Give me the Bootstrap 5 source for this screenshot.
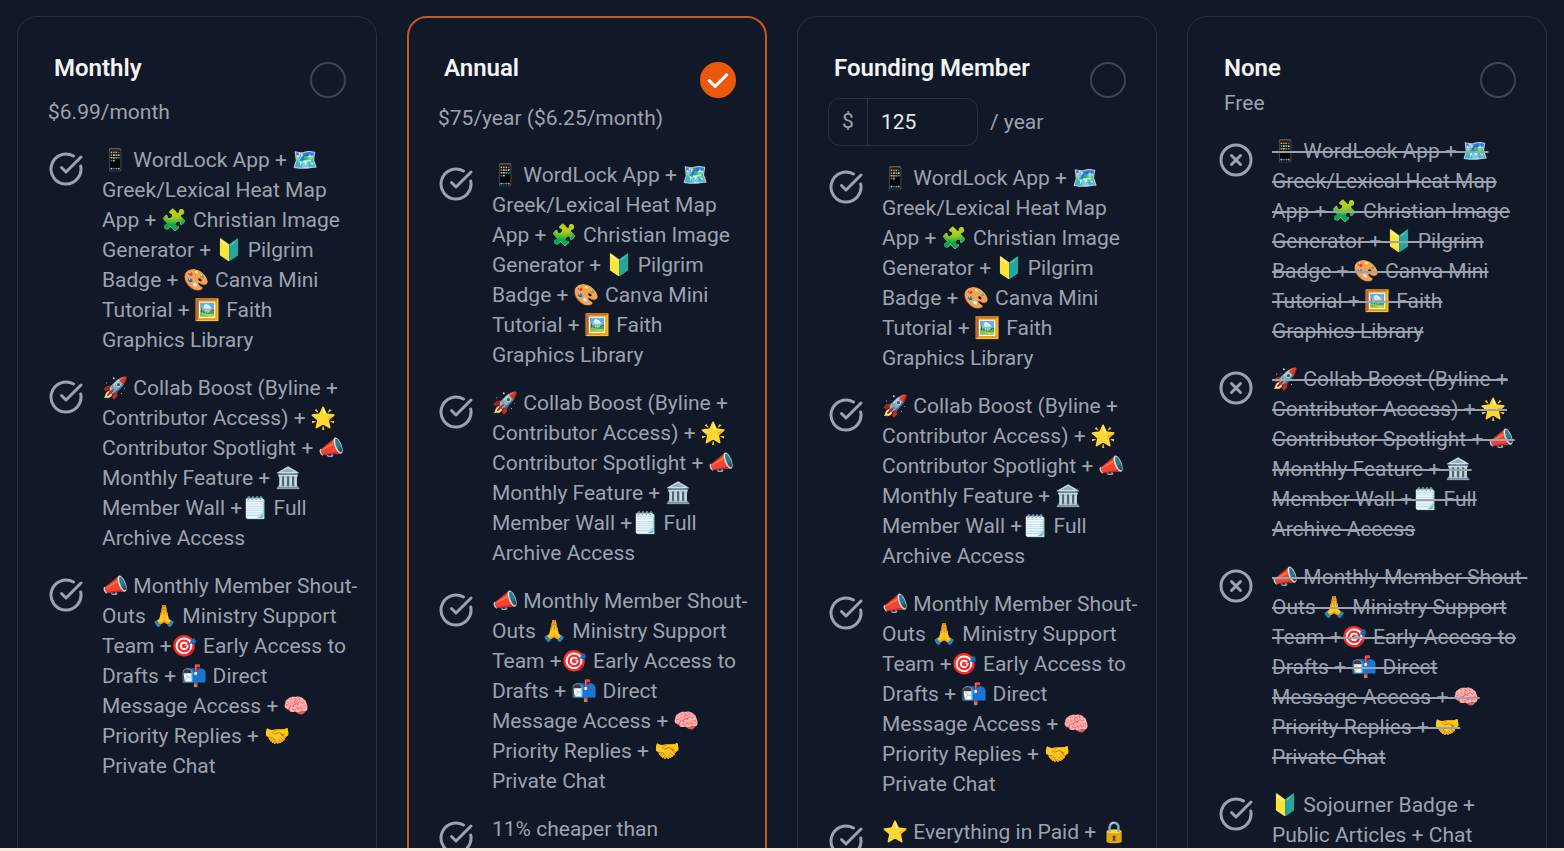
<!DOCTYPE html>
<html lang="en">
<head>
<meta charset="utf-8">
<title>Membership tiers</title>
<link href="https://cdn.jsdelivr.net/npm/bootstrap@5.3.0/dist/css/bootstrap.min.css" rel="stylesheet">
<style>
html,body{height:100%}
body{background:#111827;font-family:Roboto,"Noto Color Emoji",sans-serif;font-size:21px;line-height:30px;color:#9ca3af;overflow:hidden}
.page-shell{height:851px}
.plan-stage{padding:16px 17px 0;overflow:hidden;min-height:0}
.plan-grid{display:grid;grid-template-columns:repeat(4,360px);gap:30px}
.plan-box{background:#111827;border:1px solid #293241;border-radius:20px;padding:30px;height:1500px}
.plan-box.is-picked{border:2px solid #c4581f;padding:29px}
.plan-name{font-size:24px;line-height:29px;font-weight:600;color:#f3f4f6;padding:7px 6px 0;margin:0}
.plan-radio{width:36px;height:36px;border-radius:50%;border:2px solid #3d4653;margin-top:15px;flex:none}
.plan-radio.is-on{background:#ea580c;border-color:#ea580c}
.plan-price{height:30px}
.price-monthly{margin-top:-1px}
.price-annual{margin-top:5px}
.price-free{margin-top:-10px;padding-left:6px}
.feat-list{list-style:none;margin:18px -15px 0 0;padding:0}
.feat-list.roomy{margin-top:27px}
.feat-list.snug{margin-top:17px}
.feat-item{display:flex;gap:18px;margin-bottom:18px}
.feat-ico{width:36px;height:36px;flex:none;margin-top:6px;fill:none;stroke:#9ca3af;stroke-width:2;stroke-linecap:round;stroke-linejoin:round}
.feat-txt{min-width:0}
.feat-txt.off{text-decoration:line-through}
.price-group{width:150px;height:48px}
.price-group .input-group-text,.price-group .form-control{background:transparent;border-color:#293241;font-size:21px;height:48px}
.price-group .input-group-text{color:#9ca3af;border-radius:12px 0 0 12px;padding:0 12px;width:40px;justify-content:center}
.price-group .form-control{color:#e5e7eb;border-radius:0 12px 12px 0;padding:0 13px;box-shadow:none}
.price-row{margin-top:0;gap:12px}
.page-strip{height:3px;background:#fbe9de;flex:none}
</style>
</head>
<body>
<svg class="d-none"><defs>
<symbol id="ok" viewBox="0 0 24 24"><path d="M21.801 10A10 10 0 1 1 17 3.335"/><path d="m9 11 3 3L22 4"/></symbol>
<symbol id="no" viewBox="0 0 24 24"><circle cx="12" cy="12" r="10"/><path d="m15 9-6 6"/><path d="m9 9 6 6"/></symbol>
</defs></svg>
<div class="page-shell d-flex flex-column">
<main class="plan-stage flex-grow-1">
<div class="plan-grid">

<section class="plan-box">
  <div class="d-flex justify-content-between"><h2 class="plan-name">Monthly</h2><div class="plan-radio"></div></div>
  <div class="plan-price price-monthly">$6.99/month</div>
  <ul class="feat-list">
    <li class="feat-item"><svg class="feat-ico"><use href="#ok"/></svg><div class="feat-txt">📱 WordLock App + 🗺️ Greek/Lexical Heat Map App + 🧩 Christian Image Generator + 🔰 Pilgrim Badge + 🎨 Canva Mini Tutorial + 🖼️ Faith<br>Graphics Library</div></li>
    <li class="feat-item"><svg class="feat-ico"><use href="#ok"/></svg><div class="feat-txt">🚀 Collab Boost (Byline + Contributor Access) + 🌟 Contributor Spotlight + 📣 Monthly Feature + 🏛️ Member Wall +🗒️ Full Archive Access</div></li>
    <li class="feat-item"><svg class="feat-ico"><use href="#ok"/></svg><div class="feat-txt">📣 Monthly Member Shout-Outs 🙏 Ministry Support Team +🎯 Early Access to Drafts + 📬 Direct<br>Message Access + 🧠 Priority Replies + 🤝<br>Private Chat</div></li>
  </ul>
</section>

<section class="plan-box is-picked">
  <div class="d-flex justify-content-between"><h2 class="plan-name">Annual</h2><div class="plan-radio is-on d-flex align-items-center justify-content-center"><svg width="28" height="28" viewBox="0 0 24 24" fill="none" stroke="#fff" stroke-width="2.6" stroke-linecap="round" stroke-linejoin="round"><path d="M4.5 12.5l5 5L19.5 7.5"/></svg></div></div>
  <div class="plan-price price-annual">$75/year ($6.25/month)</div>
  <ul class="feat-list roomy">
    <li class="feat-item"><svg class="feat-ico"><use href="#ok"/></svg><div class="feat-txt">📱 WordLock App + 🗺️ Greek/Lexical Heat Map App + 🧩 Christian Image Generator + 🔰 Pilgrim Badge + 🎨 Canva Mini Tutorial + 🖼️ Faith<br>Graphics Library</div></li>
    <li class="feat-item"><svg class="feat-ico"><use href="#ok"/></svg><div class="feat-txt">🚀 Collab Boost (Byline + Contributor Access) + 🌟 Contributor Spotlight + 📣 Monthly Feature + 🏛️ Member Wall +🗒️ Full Archive Access</div></li>
    <li class="feat-item"><svg class="feat-ico"><use href="#ok"/></svg><div class="feat-txt">📣 Monthly Member Shout-Outs 🙏 Ministry Support Team +🎯 Early Access to Drafts + 📬 Direct<br>Message Access + 🧠 Priority Replies + 🤝<br>Private Chat</div></li>
    <li class="feat-item"><svg class="feat-ico"><use href="#ok"/></svg><div class="feat-txt">11% cheaper than</div></li>
  </ul>
</section>

<section class="plan-box">
  <div class="d-flex justify-content-between"><h2 class="plan-name">Founding Member</h2><div class="plan-radio"></div></div>
  <div class="d-flex align-items-center price-row">
    <div class="input-group price-group flex-nowrap"><span class="input-group-text">$</span><input class="form-control" type="text" value="125" aria-label="Amount"></div>
    <span class="year-label">/ year</span>
  </div>
  <ul class="feat-list snug">
    <li class="feat-item"><svg class="feat-ico"><use href="#ok"/></svg><div class="feat-txt">📱 WordLock App + 🗺️ Greek/Lexical Heat Map App + 🧩 Christian Image Generator + 🔰 Pilgrim Badge + 🎨 Canva Mini Tutorial + 🖼️ Faith<br>Graphics Library</div></li>
    <li class="feat-item"><svg class="feat-ico"><use href="#ok"/></svg><div class="feat-txt">🚀 Collab Boost (Byline + Contributor Access) + 🌟 Contributor Spotlight + 📣 Monthly Feature + 🏛️ Member Wall +🗒️ Full Archive Access</div></li>
    <li class="feat-item"><svg class="feat-ico"><use href="#ok"/></svg><div class="feat-txt">📣 Monthly Member Shout-Outs 🙏 Ministry Support Team +🎯 Early Access to Drafts + 📬 Direct<br>Message Access + 🧠 Priority Replies + 🤝<br>Private Chat</div></li>
    <li class="feat-item"><svg class="feat-ico"><use href="#ok"/></svg><div class="feat-txt">⭐ Everything in Paid + 🔒</div></li>
  </ul>
</section>

<section class="plan-box">
  <div class="d-flex justify-content-between"><h2 class="plan-name">None</h2><div class="plan-radio"></div></div>
  <div class="plan-price price-free">Free</div>
  <ul class="feat-list">
    <li class="feat-item"><svg class="feat-ico"><use href="#no"/></svg><div class="feat-txt off">📱 WordLock App + 🗺️ Greek/Lexical Heat Map App + 🧩 Christian Image Generator + 🔰 Pilgrim Badge + 🎨 Canva Mini Tutorial + 🖼️ Faith<br>Graphics Library</div></li>
    <li class="feat-item"><svg class="feat-ico"><use href="#no"/></svg><div class="feat-txt off">🚀 Collab Boost (Byline + Contributor Access) + 🌟 Contributor Spotlight + 📣 Monthly Feature + 🏛️ Member Wall +🗒️ Full Archive Access</div></li>
    <li class="feat-item"><svg class="feat-ico"><use href="#no"/></svg><div class="feat-txt off">📣 Monthly Member Shout-Outs 🙏 Ministry Support Team +🎯 Early Access to Drafts + 📬 Direct<br>Message Access + 🧠 Priority Replies + 🤝<br>Private Chat</div></li>
    <li class="feat-item"><svg class="feat-ico"><use href="#ok"/></svg><div class="feat-txt">🔰 Sojourner Badge + Public Articles + Chat</div></li>
  </ul>
</section>

</div>
</main>
<div class="page-strip"></div>
</div>
<script src="https://cdn.jsdelivr.net/npm/bootstrap@5.3.0/dist/js/bootstrap.bundle.min.js"></script>
</body>
</html>
